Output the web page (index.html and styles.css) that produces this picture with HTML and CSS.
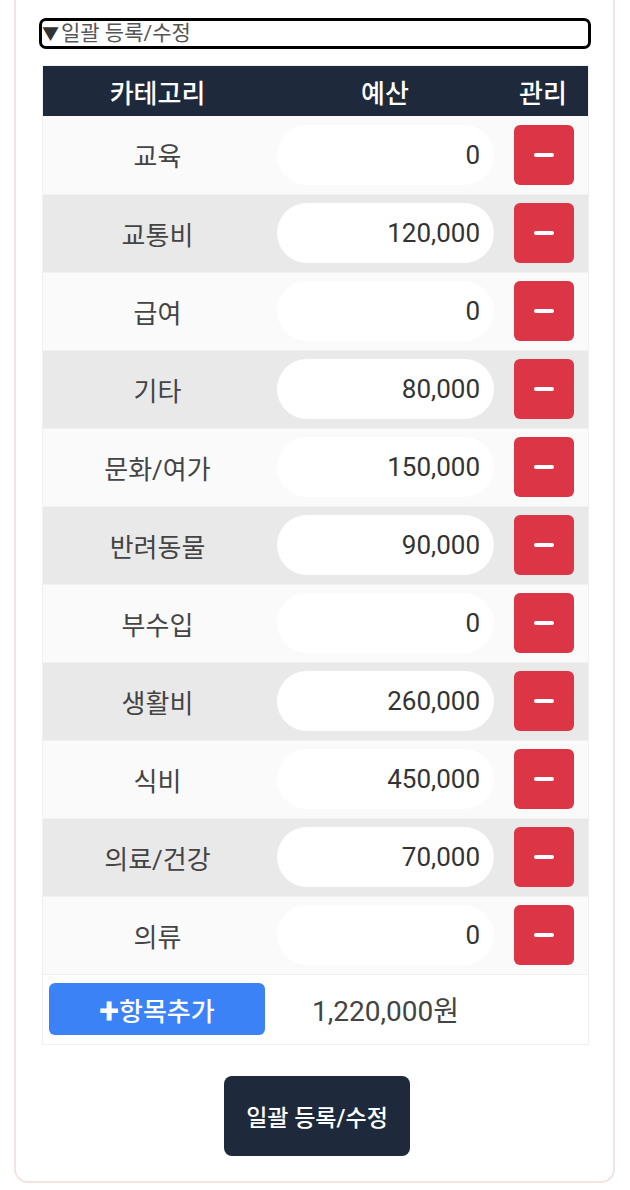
FILE: index.html
```html
<!DOCTYPE html>
<html lang="ko">
<head>
  <meta charset="UTF-8">
  <meta name="viewport" content="width=device-width, initial-scale=1.0">
  <title>일괄 등록/수정</title>
  <link rel="stylesheet" href="styles.css">
</head>
<body>
  <div class="card">
    <details class="bulk" open>
      <summary class="bulk-summary">일괄 등록/수정</summary>
    </details>

    <table class="budget-table">
      <thead>
        <tr>
          <th class="col-cat">카테고리</th>
          <th class="col-budget">예산</th>
          <th class="col-manage">관리</th>
        </tr>
      </thead>
      <tbody>
        <tr>
          <td>교육</td>
          <td><input class="amount" type="text" value="0"></td>
          <td><button class="remove" aria-label="삭제"><span class="bar"></span></button></td>
        </tr>
        <tr>
          <td>교통비</td>
          <td><input class="amount" type="text" value="120,000"></td>
          <td><button class="remove" aria-label="삭제"><span class="bar"></span></button></td>
        </tr>
        <tr>
          <td>급여</td>
          <td><input class="amount" type="text" value="0"></td>
          <td><button class="remove" aria-label="삭제"><span class="bar"></span></button></td>
        </tr>
        <tr>
          <td>기타</td>
          <td><input class="amount" type="text" value="80,000"></td>
          <td><button class="remove" aria-label="삭제"><span class="bar"></span></button></td>
        </tr>
        <tr>
          <td>문화/여가</td>
          <td><input class="amount" type="text" value="150,000"></td>
          <td><button class="remove" aria-label="삭제"><span class="bar"></span></button></td>
        </tr>
        <tr>
          <td>반려동물</td>
          <td><input class="amount" type="text" value="90,000"></td>
          <td><button class="remove" aria-label="삭제"><span class="bar"></span></button></td>
        </tr>
        <tr>
          <td>부수입</td>
          <td><input class="amount" type="text" value="0"></td>
          <td><button class="remove" aria-label="삭제"><span class="bar"></span></button></td>
        </tr>
        <tr>
          <td>생활비</td>
          <td><input class="amount" type="text" value="260,000"></td>
          <td><button class="remove" aria-label="삭제"><span class="bar"></span></button></td>
        </tr>
        <tr>
          <td>식비</td>
          <td><input class="amount" type="text" value="450,000"></td>
          <td><button class="remove" aria-label="삭제"><span class="bar"></span></button></td>
        </tr>
        <tr>
          <td>의료/건강</td>
          <td><input class="amount" type="text" value="70,000"></td>
          <td><button class="remove" aria-label="삭제"><span class="bar"></span></button></td>
        </tr>
        <tr>
          <td>의류</td>
          <td><input class="amount" type="text" value="0"></td>
          <td><button class="remove" aria-label="삭제"><span class="bar"></span></button></td>
        </tr>
      </tbody>
      <tfoot>
        <tr>
          <td><button class="add-row"><span class="plus">+</span>항목추가</button></td>
          <td class="total">1,220,000원</td>
          <td></td>
        </tr>
      </tfoot>
    </table>

    <div class="actions">
      <button class="submit">일괄 등록/수정</button>
    </div>
  </div>
</body>
</html>
```

FILE: styles.css
```css
:root {
  --navy: #1e293b;
  --red: #dc3545;
  --blue: #3b82f6;
  --text: #444444;
  --row-odd: #fafafa;
  --row-even: #e9e9e9;
}

body {
  margin: 0;
  font-family: Roboto, "Noto Sans CJK KR", sans-serif;
  background: #ffffff;
  color: var(--text);
}

.card {
  margin: 0 15px 8px 14px;
  padding: 18px 22px 26px 23px;
  border: 2px solid #f3e4e4;
  border-top: none;
  border-radius: 0 0 14px 14px;
  box-sizing: border-box;
  height: 1183px;
}

.bulk {
  border: 3px solid #000000;
  border-radius: 7px;
  height: 31px;
  box-sizing: border-box;
  margin-bottom: 17px;
  overflow: hidden;
}

.bulk-summary {
  font-size: 21px;
  line-height: 25px;
  color: #555555;
  cursor: pointer;
  list-style: none;
}

.bulk-summary::before {
  content: "▼";
  font-size: 17px;
  color: #333333;
  margin-right: 2px;
}

.budget-table {
  width: 545px;
  margin-left: 4px;
  border-collapse: collapse;
  box-shadow: 0 0 0 1px #eef0f3;
}

.budget-table th {
  background: var(--navy);
  color: #ffffff;
  font-size: 26px;
  font-weight: 500;
  height: 50px;
  padding: 0;
}

.col-cat { width: 229px; }
.col-budget { width: 226px; }
.col-manage { width: 90px; }

.budget-table tbody td {
  height: 78px;
  padding: 0;
  text-align: center;
  font-size: 26px;
  color: var(--text);
  background: var(--row-odd);
  box-sizing: border-box;
}

.budget-table tbody tr:nth-child(even) td {
  background: var(--row-even);
}

.budget-table tbody tr + tr td {
  border-top: 1px solid #f2f2f2;
}

.amount {
  display: block;
  width: 217px;
  height: 60px;
  margin-left: 5px;
  box-sizing: border-box;
  border: none;
  border-radius: 30px;
  background: #ffffff;
  padding: 0 14px;
  text-align: right;
  font-family: inherit;
  font-size: 26px;
  color: #333333;
  outline: none;
}

.remove {
  width: 60px;
  height: 60px;
  margin-left: 16px;
  display: flex;
  align-items: center;
  justify-content: center;
  border: none;
  border-radius: 6px;
  background: var(--red);
  padding: 0;
  cursor: pointer;
}

.bar {
  width: 20px;
  height: 4px;
  border-radius: 2px;
  background: #ffffff;
}

.budget-table tfoot td {
  height: 69px;
  padding: 0;
  background: #ffffff;
  border-top: 1px solid #f0f0f0;
}

.add-row {
  display: block;
  width: 216px;
  height: 52px;
  margin-left: 6px;
  border: none;
  border-radius: 6px;
  background: var(--blue);
  color: #ffffff;
  font-family: inherit;
  font-size: 26px;
  font-weight: 500;
  cursor: pointer;
}

.plus {
  font-size: 36px;
  font-weight: 700;
  line-height: 20px;
  vertical-align: -2px;
}

.total {
  font-size: 28px;
  color: #444444;
  padding-left: 40px !important;
}

.actions {
  display: flex;
  justify-content: center;
  margin-top: 32px;
  padding-left: 4px;
}

.submit {
  width: 186px;
  height: 80px;
  border: none;
  border-radius: 8px;
  background: var(--navy);
  color: #ffffff;
  font-family: inherit;
  font-size: 23px;
  font-weight: 500;
  cursor: pointer;
}
```
